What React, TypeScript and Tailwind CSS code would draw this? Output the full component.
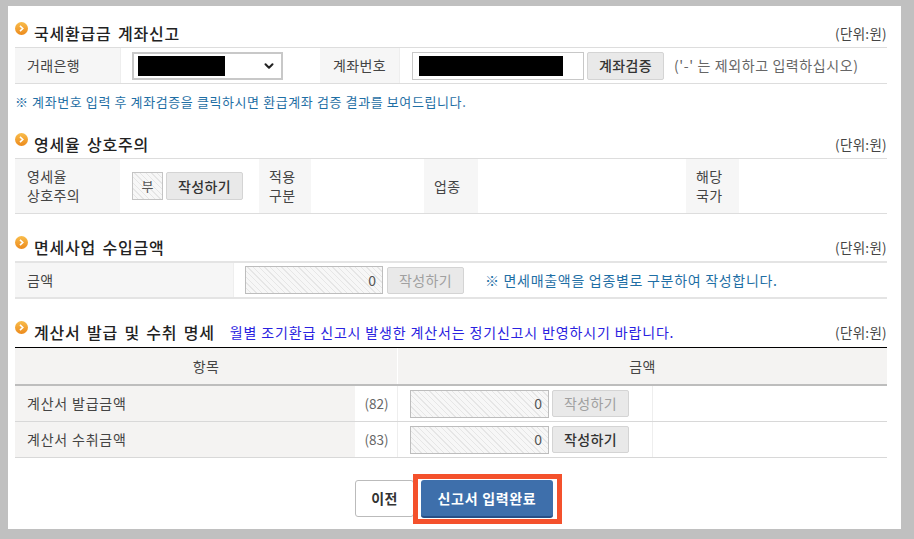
import { ChevronDown } from 'lucide-react';

const hatch =
  'bg-[repeating-linear-gradient(45deg,#f7f7f7_0px,#f7f7f7_3px,#e6e6e6_3px,#e6e6e6_4px)]';

function SectionTitle({ text, note }: { text: string; note?: string }) {
  return (
    <div className="relative flex h-[26px] items-center pl-[19px]">
      <svg className="absolute left-0 top-[2px]" width="13" height="13" viewBox="0 0 13 13">
        <defs>
          <linearGradient id="dot" x1="0" y1="0" x2="0" y2="1">
            <stop offset="0" stopColor="#f9bd4c" />
            <stop offset="1" stopColor="#ec8a1c" />
          </linearGradient>
        </defs>
        <circle cx="6.5" cy="6.5" r="6.5" fill="url(#dot)" />
        <path d="M5 3.8 L7.8 6.5 L5 9.2" fill="none" stroke="#fff" strokeWidth="1.6" />
      </svg>
      <span className="text-[16px] font-medium tracking-[0.8px] [word-spacing:2px] text-[#222]">{text}</span>
      {note && <span className="ml-[15px] text-[14px] tracking-[0.85px] text-[#2a22e0]">{note}</span>}
      <span className="ml-auto text-[13.5px] tracking-[0.3px] text-[#444]">(단위:원)</span>
    </div>
  );
}

function Label({ children, center, narrow }: { children: React.ReactNode; center?: boolean; narrow?: boolean }) {
  return (
    <div
      className={`flex items-center bg-[#f6f6f6] text-[14px] leading-[19px] tracking-[0.4px] text-[#444] ${
        center ? 'justify-center text-center' : narrow ? 'pl-[10px]' : 'pl-[12px]'
      }`}
    >
      {children}
    </div>
  );
}

function Btn({ text, w, muted, h = 'h-[27px]' }: { text: string; w: string; muted?: boolean; h?: string }) {
  return (
    <div
      className={`flex shrink-0 items-center justify-center rounded-[2px] border border-[#d4d4d4] bg-[#e9e9e9] text-[14px] tracking-[0.4px] ${h} ${w} ${
        muted ? 'text-[#a0a0a0]' : 'font-medium text-[#333]'
      }`}
    >
      {text}
    </div>
  );
}

function Amount({ w }: { w: string }) {
  return (
    <div className={`flex h-[28px] items-center justify-end border border-[#bdbdbd] pr-[6px] text-[14px] text-[#555] ${w} ${hatch}`}>
      0
    </div>
  );
}

function AmountRow({ label, code, muted }: { label: string; code: string; muted?: boolean }) {
  return (
    <div className="grid h-[36px] grid-cols-[340px_43px_255px_1fr] border-b border-[#d8d8d8] text-[14px]">
      <div className="flex items-center bg-[#f4f3f2] pl-[12px] tracking-[0.8px] text-[#444]">{label}</div>
      <div className="flex items-center justify-center border-r border-[#eeeeee] pl-[1px] text-[13.5px] text-[#666]">{code}</div>
      <div className="flex items-center gap-[3px] border-r border-[#eeeeee] pl-[12px]">
        <Amount w="w-[139px]" />
        <Btn text="작성하기" w="w-[77px]" muted={muted} />
      </div>
      <div />
    </div>
  );
}

export default function App() {
  return (
    <div className="h-[539px] w-[914px] overflow-hidden bg-[#c0c0c0] pl-[8px] pt-[6px] font-['Noto_Sans_CJK_KR','Noto_Sans',sans-serif]">
      <div className="h-[523px] w-[893px] bg-white pl-[7px] pr-[14px] pt-[14px]">
        <SectionTitle text="국세환급금 계좌신고" />
        <div className="mt-[1px] grid h-[37px] grid-cols-[105px_200px_79px_1fr] border-y border-[#dddddd]">
          <Label>거래은행</Label>
          <div className="flex items-center border-l border-[#eeeeee] pl-[11px]">
            <div className="flex h-[28px] w-[151px] items-center justify-between border-2 border-[#c8c8c8] pl-[4px] pr-[5px]">
              <div className="h-[20px] w-[87px] bg-black" />
              <ChevronDown size={14} strokeWidth={3.5} className="text-[#222]" />
            </div>
          </div>
          <Label center>계좌번호</Label>
          <div className="flex items-center border-l border-[#eeeeee] pl-[12px]">
            <div className="flex h-[28px] w-[172px] items-center border border-[#c8c8c8] pl-[6px]">
              <div className="h-[20px] w-[144px] bg-black" />
            </div>
            <div className="ml-[3px]">
              <Btn text="계좌검증" w="w-[77px]" h="h-[28px]" />
            </div>
            <span className="ml-[10px] text-[14px] tracking-[0.6px] text-[#666]">('-' 는 제외하고 입력하십시오)</span>
          </div>
        </div>
        <div className="flex h-[36px] items-center text-[13px] tracking-[0.6px] text-[#1f6fa5]">
          ※ 계좌번호 입력 후 계좌검증을 클릭하시면 환급계좌 검증 결과를 보여드립니다.
        </div>

        <div className="mt-[11px]">
          <SectionTitle text="영세율 상호주의" />
        </div>
        <div className="mt-[1px] grid h-[56px] grid-cols-[105px_139px_52px_113px_54px_208px_53px_1fr] border-y border-[#dddddd]">
          <Label>
            영세율
            <br />
            상호주의
          </Label>
          <div className="flex items-center gap-[3px] pl-[12px]">
            <div className={`flex h-[28px] w-[31px] items-center justify-center border border-[#c4c4c4] text-[13px] text-[#555] ${hatch}`}>
              부
            </div>
            <Btn text="작성하기" w="w-[77px]" h="h-[28px]" />
          </div>
          <Label narrow>
            적용
            <br />
            구분
          </Label>
          <div />
          <Label narrow>업종</Label>
          <div />
          <Label narrow>
            해당
            <br />
            국가
          </Label>
          <div />
        </div>

        <div className="mt-[20px]">
          <SectionTitle text="면세사업 수입금액" />
        </div>
        <div className="mt-[1px] grid h-[38px] grid-cols-[218px_1fr] border-y-2 border-[#e4e4e4]">
          <Label>금액</Label>
          <div className="flex items-center gap-[4px] border-l border-[#eeeeee] pl-[11px]">
            <Amount w="w-[138px]" />
            <Btn text="작성하기" w="w-[77px]" muted />
            <span className="ml-[17px] text-[14px] tracking-[0.7px] text-[#1f6fa5]">※ 면세매출액을 업종별로 구분하여 작성합니다.</span>
          </div>
        </div>

        <div className="mb-[2px] mt-[20px]">
          <SectionTitle text="계산서 발급 및 수취 명세" note="월별 조기환급 신고시 발생한 계산서는 정기신고시 반영하시기 바랍니다." />
        </div>
        <div className="grid h-[39px] grid-cols-[383px_1fr] border-t-[1px] border-b-2 border-t-black border-b-[#bdbdbd] bg-[#f4f3f2] text-[14px] tracking-[0.4px] text-[#444]">
          <div className="flex items-center justify-center border-r border-white">항목</div>
          <div className="flex items-center justify-center">금액</div>
        </div>
        <AmountRow label="계산서 발급금액" code="(82)" muted />
        <AmountRow label="계산서 수취금액" code="(83)" />

        <div className="mt-[16px] flex items-start pl-[340px]">
          <div className="mt-[6px] flex h-[37px] w-[59px] items-center justify-center rounded-[3px] border border-[#bbbbbb] bg-white text-[14px] font-bold tracking-[0.4px] text-[#333]">
            이전
          </div>
          <div className="-ml-[1px] border-[5px] border-[#f4512c] py-[1px] pl-[3px] pr-[4px]">
            <div className="flex h-[38px] w-[132px] items-center justify-center rounded-[3px] border-b-2 border-[#274f86] bg-[#3e6fab] text-[14px] font-bold tracking-[0.7px] text-white">
              신고서 입력완료
            </div>
          </div>
        </div>
      </div>
    </div>
  );
}
